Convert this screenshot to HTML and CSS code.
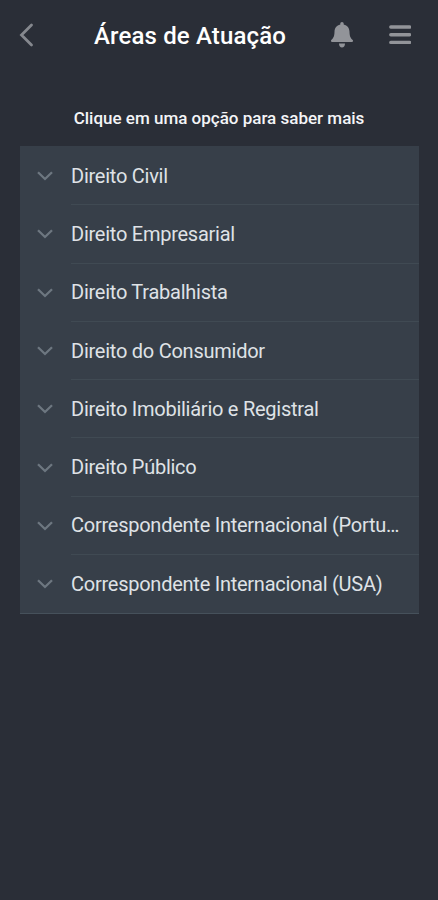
FILE: index.html
```html
<!DOCTYPE html>
<html lang="pt-BR">
<head>
<meta charset="utf-8">
<meta name="viewport" content="width=device-width, initial-scale=1">
<title>Áreas de Atuação</title>
<link rel="stylesheet" href="styles.css">
</head>
<body>
<svg class="sprite" aria-hidden="true">
  <symbol id="chevron" viewBox="0 0 18 12"><path d="M2 2.200 9 9l7-6.800" fill="none" stroke="currentColor" stroke-width="2.300"/></symbol>
</svg>
<header class="bar">
  <svg class="back" viewBox="0 0 16 24"><path d="M13.500 2 3.500 12 13.500 22" fill="none" stroke="currentColor" stroke-width="2.800" stroke-linecap="round"/></svg>
  <h1 class="title"><span>Áreas de Atuação</span></h1>
  <svg class="bell" viewBox="0 0 22 26"><path d="M11 0c1 0 1.700.8 1.700 1.700v.8c3.700.8 5.700 3.600 5.800 7.300.1 4.300.9 6.200 3.200 8.200.7.700.3 2.100-.8 2.100H1.100c-1.100 0-1.500-1.400-.8-2.100 2.300-2 3.100-3.900 3.200-8.200.1-3.700 2.100-6.500 5.800-7.300v-.8C9.300.8 10 0 11 0zM8 21.500h6c0 2.500-1.300 4-3 4s-3-1.500-3-4z" fill="currentColor"/></svg>
  <svg class="menu" viewBox="0 0 22 20"><path d="M1.800 2h18.800M1.800 9.700h18.800M1.800 17.400h18.800" stroke="currentColor" stroke-width="3.400" stroke-linecap="round"/></svg>
</header>
<main>
  <p class="hint"><span>Clique em uma opção para saber mais</span></p>
  <ul class="list">
    <li class="row"><svg class="chevron"><use href="#chevron"/></svg><div class="label"><span>Direito Civil</span></div></li>
    <li class="row"><svg class="chevron"><use href="#chevron"/></svg><div class="label"><span>Direito Empresarial</span></div></li>
    <li class="row"><svg class="chevron"><use href="#chevron"/></svg><div class="label"><span>Direito Trabalhista</span></div></li>
    <li class="row"><svg class="chevron"><use href="#chevron"/></svg><div class="label"><span>Direito do Consumidor</span></div></li>
    <li class="row"><svg class="chevron"><use href="#chevron"/></svg><div class="label"><span>Direito Imobiliário e Registral</span></div></li>
    <li class="row"><svg class="chevron"><use href="#chevron"/></svg><div class="label"><span>Direito Público</span></div></li>
    <li class="row"><svg class="chevron"><use href="#chevron"/></svg><div class="label"><span>Correspondente Internacional (Portu…</span></div></li>
    <li class="row"><svg class="chevron"><use href="#chevron"/></svg><div class="label"><span>Correspondente Internacional (USA)</span></div></li>
  </ul>
</main>
</body>
</html>
```

FILE: styles.css
```css
* { box-sizing: border-box; }
body {
  margin: 0;
  min-height: 900px;
  background: #2a2e37;
  color: #fff;
  font-family: Roboto, "Liberation Sans", sans-serif;
}
svg { display: block; flex: none; }
.sprite { display: none; }
.bar {
  display: flex;
  align-items: center;
  height: 70px;
  padding: 0 26px 0 18px;
  color: #929499;
}
.back { width: 16px; height: 24px; color: #85888e; }
.title {
  flex: 1;
  margin: 1px 0 0 60px;
  color: #fff;
  font-size: 24px;
  font-weight: 500;
  letter-spacing: 0.15px;
  line-height: 30px;
  white-space: nowrap;
}
.bell { width: 22px; height: 26px; margin-right: 36px; }
.menu { width: 22px; height: 20px; margin-right: 1px; }
.hint {
  margin: 0;
  padding: 37px 0 0;
  color: #f4f5f7;
  font-size: 17px;
  font-weight: 500;
  line-height: 22px;
  text-align: center;
}
.list {
  margin: 17px 19px 0 20px;
  padding: 1px 0 0;
  list-style: none;
  background: #373f49;
  border-bottom: 1px solid #46515b;
}
.row { display: flex; align-items: center; height: 58.3px; padding-left: 16px; }
.chevron { width: 18px; height: 12px; margin-right: 17px; color: #6d7780; }
.label {
  display: flex;
  align-items: center;
  flex: 1;
  min-width: 0;
  height: 100%;
  border-bottom: 1px solid #404a53;
  color: #dfe2e6;
  font-size: 20px;
  letter-spacing: -0.25px;
  white-space: nowrap;
}
.row:last-child .label { border-bottom-color: transparent; }
```
